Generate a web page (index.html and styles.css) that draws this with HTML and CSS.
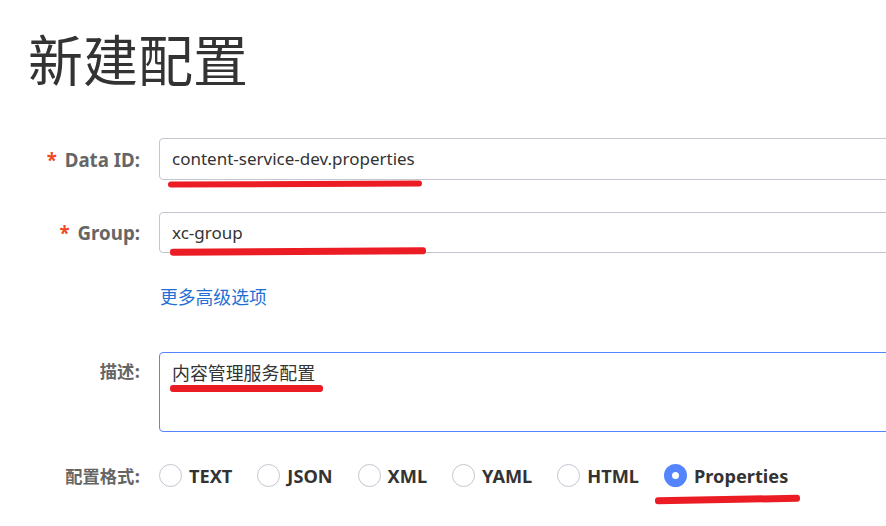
FILE: index.html
```html
<!DOCTYPE html>
<html lang="zh-CN">
<head>
<meta charset="utf-8">
<title>新建配置</title>
<link rel="stylesheet" href="styles.css">
</head>
<body>
<div class="page">
  <h1 class="title">新建配置</h1>
  <form class="form">
    <div class="row row-dataid">
      <label class="label"><span class="req">*</span> Data ID:</label>
      <div class="control">
        <div class="input">content-service-dev.properties</div>
        <span class="mark mark-dataid"></span>
      </div>
    </div>
    <div class="row row-group">
      <label class="label"><span class="req">*</span> Group:</label>
      <div class="control">
        <div class="input">xc-group</div>
        <span class="mark mark-group"></span>
      </div>
    </div>
    <div class="row row-more">
      <div class="label"></div>
      <div class="control"><a class="more">更多高级选项</a></div>
    </div>
    <div class="row row-desc">
      <label class="label label-top">描述:</label>
      <div class="control">
        <div class="textarea">内容管理服务配置</div>
        <span class="mark mark-desc"></span>
      </div>
    </div>
    <div class="row row-format">
      <label class="label label-cn">配置格式:</label>
      <div class="control radios">
        <span class="radio"><span class="dot"></span>TEXT</span>
        <span class="radio"><span class="dot"></span>JSON</span>
        <span class="radio"><span class="dot"></span>XML</span>
        <span class="radio"><span class="dot"></span>YAML</span>
        <span class="radio"><span class="dot"></span>HTML</span>
        <span class="radio checked"><span class="dot"></span>Properties<span class="mark mark-props"></span></span>
      </div>
    </div>
  </form>
</div>
</body>
</html>
```
FILE: styles.css
```css
html, body {
  margin: 0;
  padding: 0;
  background: #fff;
  overflow: hidden;
}
body {
  font-family: "Noto Sans", "Noto Sans CJK SC", sans-serif;
  color: #333;
}
.page {
  width: 886px;
  height: 526px;
  overflow: hidden;
}
.title {
  margin: 0;
  padding: 22px 0 0 28px;
  font-family: "Noto Sans CJK SC", sans-serif;
  font-weight: 400;
  font-size: 55px;
  line-height: 70px;
  color: #333;
  letter-spacing: 0;
}
.form {
  margin-top: 46px;
}
.row {
  display: grid;
  grid-template-columns: 140px 1fr;
  column-gap: 19px;
  align-items: center;
}
.label {
  text-align: right;
  font-weight: 700;
  font-size: 18.7px;
  color: #666;
  white-space: nowrap;
}
.label-cn, .label-top {
  font-family: "Noto Sans CJK SC", sans-serif;
  font-size: 17.3px;
}
.label-top {
  align-self: start;
  padding-top: 6px;
}
.req {
  color: #f04a24;
  margin-right: 3px;
}
.control {
  position: relative;
}
.input {
  box-sizing: border-box;
  width: 760px;
  height: 42px;
  border: 1px solid #c4c6cf;
  border-radius: 4px;
  padding: 0 12px;
  font-size: 17px;
  line-height: 40px;
  color: #333;
}
.row-group {
  margin-top: 32px;
}
.row-group .input {
  height: 41px;
  line-height: 39px;
}
.row-more {
  margin-top: 31px;
}
.more {
  font-family: "Noto Sans CJK SC", sans-serif;
  font-size: 17.8px;
  line-height: 24px;
  color: #1f6fd6;
  margin-left: 1px;
}
.row-desc {
  margin-top: 43px;
}
.textarea {
  box-sizing: border-box;
  width: 760px;
  height: 80px;
  border: 1px solid #5584ff;
  border-radius: 4px;
  padding: 6px 12px;
  font-family: "Noto Sans CJK SC", sans-serif;
  font-size: 17.9px;
  line-height: 26px;
  color: #333;
}
.row-format {
  margin-top: 31px;
}
.radios {
  display: flex;
  align-items: center;
  gap: 25px;
}
.radio {
  position: relative;
  display: inline-flex;
  align-items: center;
  gap: 7px;
  font-weight: 700;
  font-size: 18.2px;
  line-height: 24px;
  color: #333;
}
.dot {
  box-sizing: border-box;
  width: 23px;
  height: 23px;
  border: 1px solid #c4c6cf;
  border-radius: 50%;
  background: #fff;
}
.checked .dot {
  border: 8px solid #5584ff;
  background: #fff;
}
.mark {
  position: absolute;
  display: block;
  height: 6px;
  border-radius: 3px;
  background: #ec1c24;
}
.mark-dataid {
  left: 9px;
  top: 43px;
  width: 254px;
  transform: rotate(-0.2deg);
}
.mark-group {
  left: 11px;
  top: 36px;
  width: 256px;
  height: 7px;
  transform: rotate(-0.3deg);
}
.mark-desc {
  left: 11px;
  top: 33px;
  width: 153px;
  height: 7px;
}
.mark-props {
  left: -9px;
  top: 32px;
  width: 145px;
  height: 7px;
  transform: rotate(-1deg);
}
```
